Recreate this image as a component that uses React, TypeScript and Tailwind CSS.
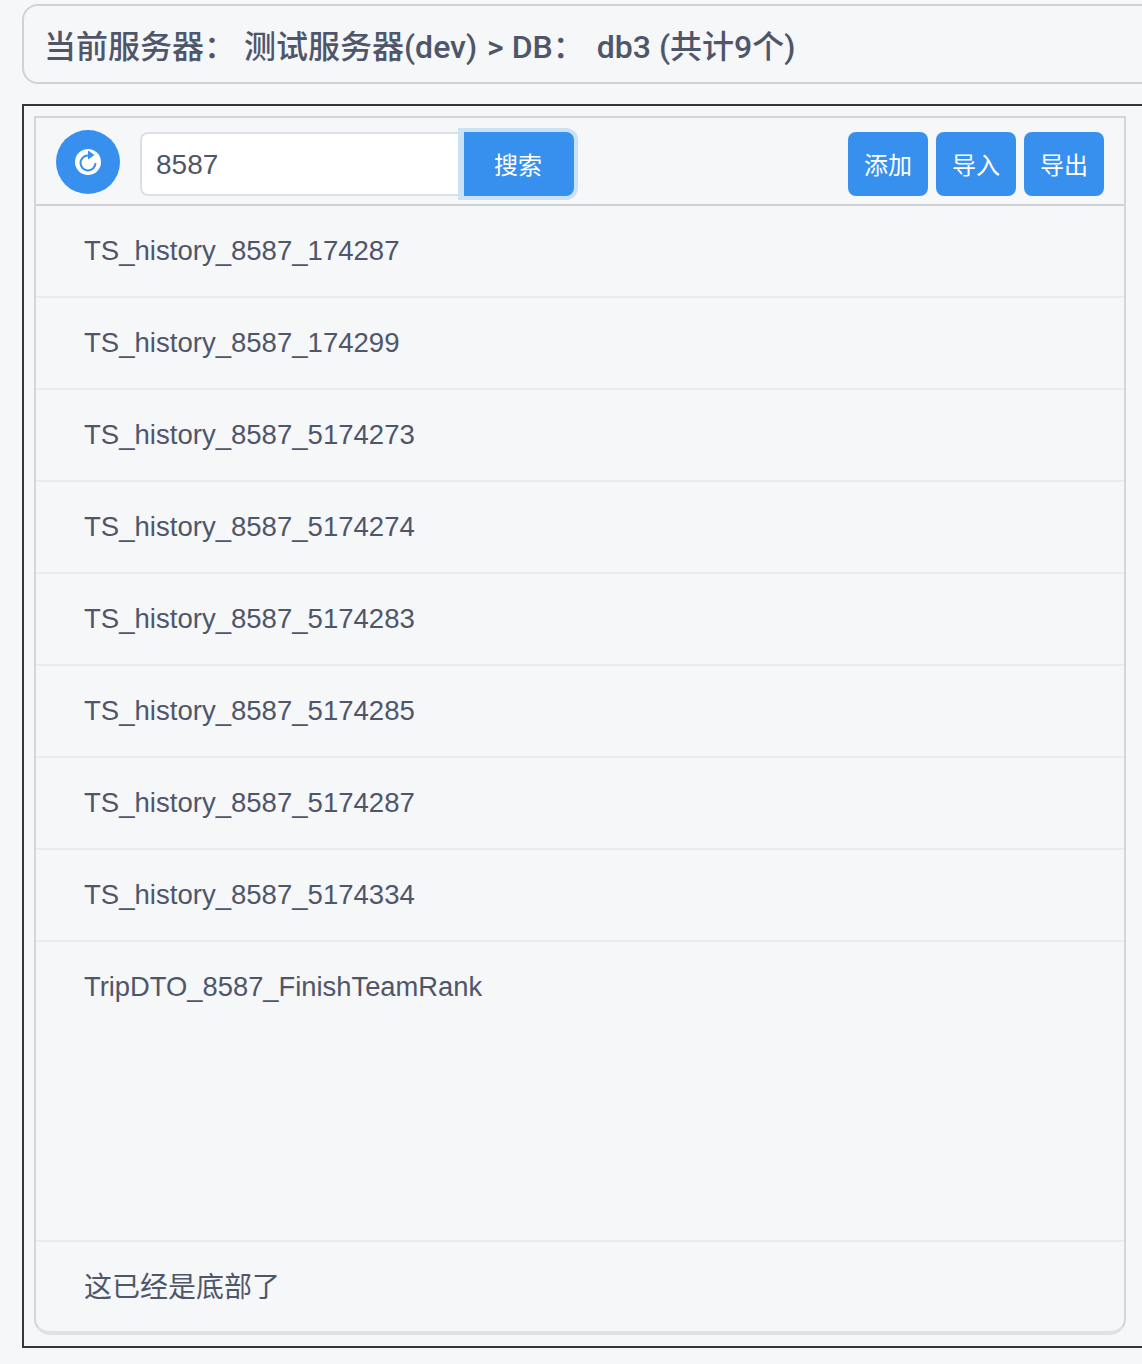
const tables = [
  "TS_history_8587_174287",
  "TS_history_8587_174299",
  "TS_history_8587_5174273",
  "TS_history_8587_5174274",
  "TS_history_8587_5174283",
  "TS_history_8587_5174285",
  "TS_history_8587_5174287",
  "TS_history_8587_5174334",
];

const font = "font-['Liberation_Sans','Noto_Sans_CJK_SC',sans-serif]";

function RefreshIcon() {
  return (
    <svg width="28" height="28" viewBox="0 0 28 28">
      <circle cx="14" cy="14" r="13" fill="#fff" />
      <path d="M14 7.5a7.5 7.5 0 1 0 7.5 7.5" fill="none" stroke="#3790ed" strokeWidth="2" />
      <path d="M14 2.5 20.5 7 14 11.5Z" fill="#3790ed" />
    </svg>
  );
}

function ActionButton({ label }: { label: string }) {
  return (
    <button className="w-20 h-16 pt-[3px] rounded-lg bg-[#3790ed] text-white text-2xl">{label}</button>
  );
}

export default function App() {
  return (
    <div className={`${font} w-[1142px] h-[1364px] overflow-hidden bg-[#f6f7f9] text-[#4f5669] pt-1 pl-[22px]`}>
      <div className="w-[1160px] h-20 border-2 border-[#d0d3d6] rounded-2xl flex items-center pl-5 pt-[6px] text-[32px] font-medium whitespace-pre font-['Roboto','Noto_Sans_CJK_SC',sans-serif]">
        当前服务器：<span className="ml-2">测试服务器(dev)</span><span className="ml-0.5">&nbsp;&gt; DB：</span><span className="ml-3">db3 (共计9个)</span>
      </div>

      <div className="mt-5 w-[1160px] h-[1244px] border-2 border-[#33363a] pt-[10px] pl-[10px]">
        <div className="w-[1092px] h-[1219px] border-2 border-[#d4d6d9] border-b-4 border-b-[#dfe1e3] rounded-b-2xl flex flex-col">
          <div className="h-[88px] shrink-0 border-b-2 border-[#cfd1d4] flex items-start pl-5 pr-5 pt-3">
            <div className="w-16 h-16 rounded-full bg-[#3790ed] flex items-center justify-center">
              <RefreshIcon />
            </div>
            <div className="ml-5 mt-0.5 flex h-16">
              <input
                readOnly
                value="8587"
                className="w-[324px] h-16 pt-0.5 bg-white border-2 border-r-0 border-[#dcdfe6] rounded-l-lg pl-[14px] text-[28px] text-[#4f5669] outline-none"
              />
              <button className="w-[110px] h-16 pt-[3px] pr-0.5 rounded-r-lg bg-[#3790ed] text-white text-2xl shadow-[-2px_0_0_4px_#cbe1f6,0_0_0_4px_#cbe1f6]">搜索</button>
            </div>
            <div className="ml-auto mt-0.5 flex gap-2">
              <ActionButton label="添加" />
              <ActionButton label="导入" />
              <ActionButton label="导出" />
            </div>
          </div>

          {tables.map((t) => (
            <div key={t} className="h-[92px] shrink-0 border-b-2 border-[#e9ebee] pl-12 pt-[25px] text-[27.55px] leading-[40px]">
              {t}
            </div>
          ))}
          <div className="h-[300px] shrink-0 border-b-2 border-[#e9ebee] pl-12 pt-[25px] text-[27.35px] leading-[40px]">
            TripDTO_8587_FinishTeamRank
          </div>
          <div className="pl-12 pt-[26px] text-[28px] leading-[40px]">这已经是底部了</div>
        </div>
      </div>
    </div>
  );
}
